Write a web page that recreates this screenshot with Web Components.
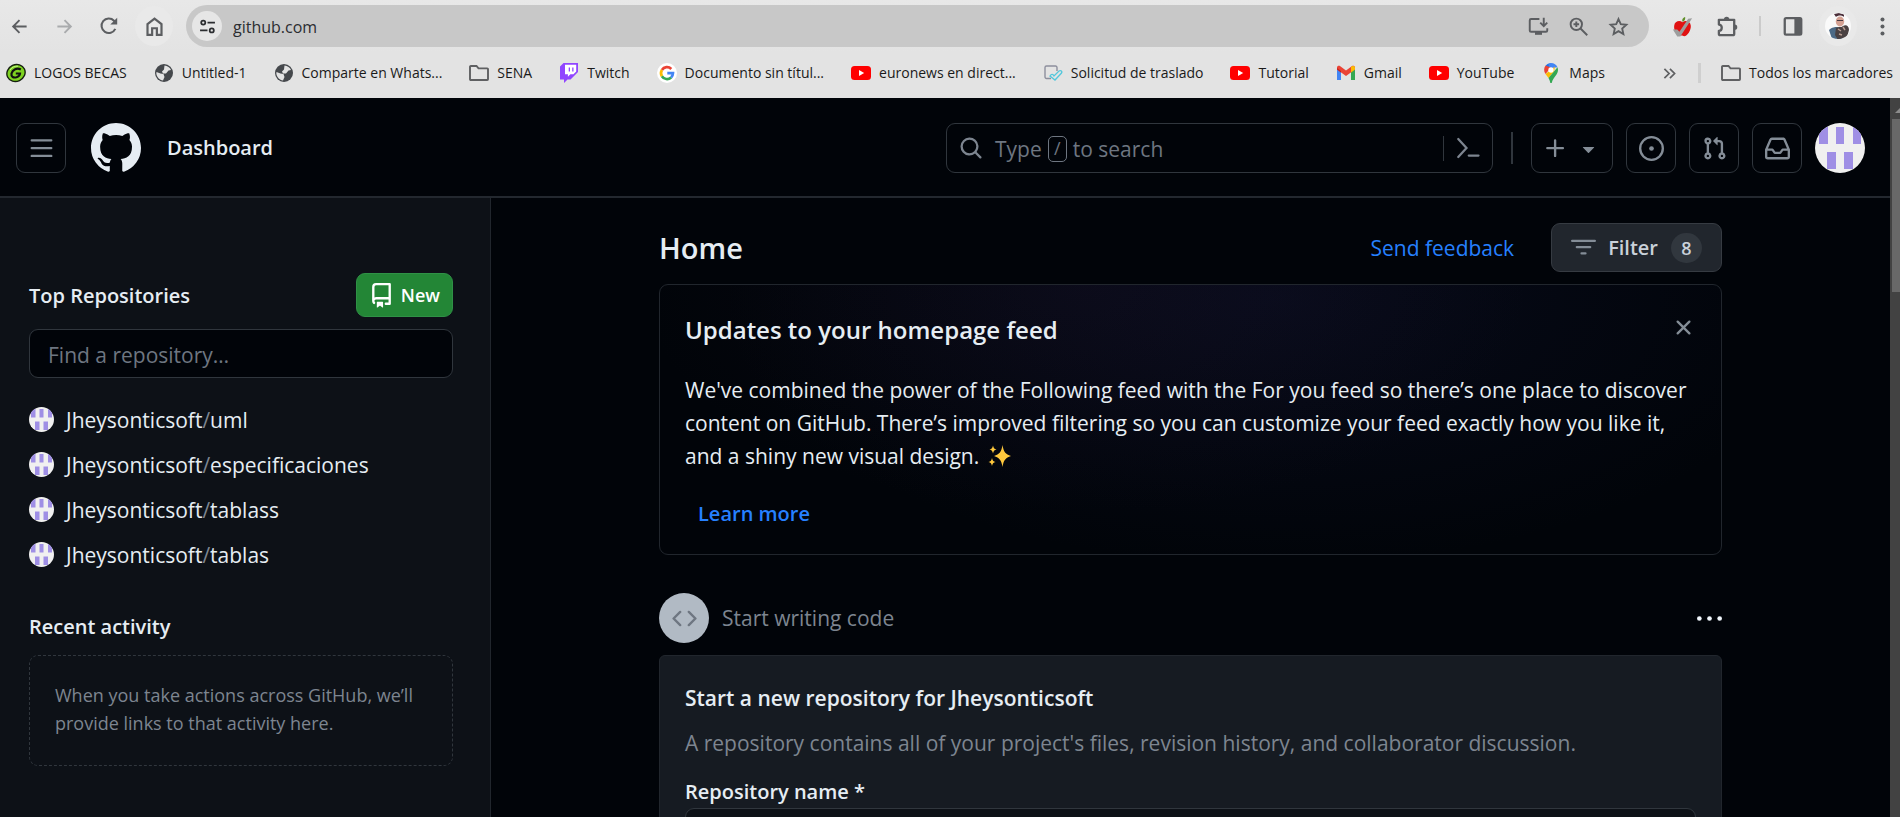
<!DOCTYPE html>
<html lang="es">
<head>
<meta charset="utf-8">
<title>GitHub</title>
<style>
  html, body { margin: 0; height: 100%; }
  body { font-family: "Open Sans", "Noto Sans", sans-serif; background: #010409; color: #e6edf3; overflow: hidden; }
</style>
</head>
<body>
<app-window></app-window>

<script>
const RESET = `
  *, *::before, *::after { box-sizing: border-box; }
  h1, h2, h3, p, ul { margin: 0; padding: 0; }
  ul { list-style: none; }
  button, input { font: inherit; color: inherit; margin: 0; padding: 0; border: 0; background: none; }
  button { cursor: pointer; }
  a { color: inherit; text-decoration: none; }
`;

function define(name, css, html) {
  customElements.define(name, class extends HTMLElement {
    constructor() {
      super();
      const template = document.createElement('template');
      template.innerHTML = `<style>${RESET}${css}</style>${typeof html === 'function' ? html(this) : html}`;
      this.attachShadow({ mode: 'open' }).append(template.content.cloneNode(true));
    }
  });
}

/* Each entry: [viewBox, markup] */
const ICONS = {
  back: ['0 0 24 24', '<path d="M21 12H4.500M12 4l-8 8 8 8" fill="none" stroke="currentColor" stroke-width="2.400"/>'],
  forward: ['0 0 24 24', '<path d="M3 12h16.500M12 4l8 8-8 8" fill="none" stroke="currentColor" stroke-width="2.400"/>'],
  reload: ['0 0 24 24', '<path d="M19.600 15.500A8.700 8.700 0 1 1 18 5.600l2.500 2.600" fill="none" stroke="currentColor" stroke-width="2.500"/><path d="M21.800 2v8.200h-8.200z" fill="currentColor"/>'],
  home: ['0 0 24 24', '<path d="M4 9.300 12 3l8 6.300V21.500h-5.300V14H9.300v7.500H4z" fill="none" stroke="currentColor" stroke-width="2.500"/>'],
  tune: ['0 0 24 24', '<g fill="none" stroke="currentColor" stroke-width="2.500"><circle cx="6" cy="6.500" r="2.900"/><path d="M12 6.500h10.500M1.500 17.500H12"/><circle cx="18" cy="17.500" r="2.900"/></g>'],
  install: ['0 0 24 24', '<path d="M13 3.500H3.500a1.500 1.500 0 0 0-1.500 1.500v11.500a1.500 1.500 0 0 0 1.500 1.500h17a1.500 1.500 0 0 0 1.500-1.500V14M18 2v8M14 7.500l4 4 4-4" fill="none" stroke="currentColor" stroke-width="2.200"/><path d="M8 18h8v3.500H8z" fill="currentColor"/>'],
  zoom: ['0 0 24 24', '<g fill="none" stroke="currentColor" stroke-width="2.200"><circle cx="9.500" cy="9.500" r="6.500"/><path d="M14.300 14.300 22 22M6.300 9.500h6.400M9.500 6.300v6.400"/></g>'],
  star: ['0 0 24 24', '<path d="m12 3.500 2.600 5.900 6.400.6-4.800 4.300 1.400 6.300L12 17.300l-5.600 3.300 1.400-6.300L3 10l6.400-.6z" fill="none" stroke="currentColor" stroke-width="2.100"/>'],
  apple: ['0 0 24 24', '<path d="M12 7c3-2.500 9-1.500 9.500 4 .4 5-4 12-7.500 12-1.500 0-2-.6-3-.6s-2 .6-3.500 0C4 20.500 2 15 2.500 11 3 6 8.500 4.500 12 7z" fill="#e01212"/><path d="M12 6.500C11 4 12.500 1.500 15 1c.5 2.500-.5 4.500-3 5.500z" fill="#5f8f2a"/><path d="M1 15.500h5l2.500 2.500L18.500 3l4.500-.5L9.500 23.500H6z" fill="#9d9d9d"/>'],
  puzzle: ['0 0 24 24', '<path d="M3 5h16v14.500a1.500 1.500 0 0 1-1.500 1.500h-13A1.500 1.500 0 0 1 3 19.500V16.500c4 0 4-6.500 0-6.500z" fill="none" stroke="currentColor" stroke-width="2.400" stroke-linejoin="round"/><path d="M8.300 4.500a2.800 2.800 0 0 1 5.600 0zM19.500 10a2.700 2.700 0 0 1 0 5.400z" fill="currentColor"/>'],
  panel: ['0 0 24 24', '<rect x="3" y="3.500" width="18" height="18" rx="1.500" fill="none" stroke="currentColor" stroke-width="2.500"/><path d="M13.500 3h7.500v18.500h-7.500z" fill="currentColor"/>'],
  dots: ['0 0 24 24', '<g fill="currentColor"><circle cx="12" cy="4" r="2.300"/><circle cx="12" cy="12" r="2.300"/><circle cx="12" cy="20" r="2.300"/></g>'],
  face: ['0 0 26 26', '<defs><clipPath id="c"><circle cx="13" cy="13" r="13"/></clipPath></defs><g clip-path="url(#c)"><path fill="#fafafa" d="M0 0h26v26H0z"/><path d="M4 17c3-3 6-3 8-3l4 1 2 11H7z" fill="#4c6a86"/><ellipse cx="15" cy="8.500" rx="4.200" ry="5" fill="#d5a294"/><path d="M9 1l2 3c2-2 6-2 8 0V1.500L14 0z" fill="#4b2f3a"/><path d="M12 7.500h6" stroke="#4a3b42" stroke-width="1"/><path d="M11 15c3-2 5 0 7-2 3-2 6 0 6 4l-2 7-9 3-3-5z" fill="#4a4142"/><path d="M13 16l3 2m2-4 2 3m-6 4 3 1" stroke="#b79d92" stroke-width="1.500"/></g>'],
  gring: ['0 0 20 20', '<ellipse cx="10" cy="10" rx="10" ry="9" transform="rotate(-25 10 10)" fill="#16200f"/><ellipse cx="10" cy="10" rx="8.600" ry="7.600" transform="rotate(-25 10 10)" fill="#7ed321"/><path d="M14.800 6.500C11 4.500 6.500 6.500 5.500 10.500c-.6 3.500 2 4.500 5 3.800 2-.6 3.300-2 3.500-3.800H9.800" fill="none" stroke="#111" stroke-width="2.200"/><path d="M4 7C6 4 9 3 12 3.200" stroke="#c6f58c" fill="none"/>'],
  globe: ['0 0 20 20', '<circle cx="10" cy="10" r="9" fill="#45484c"/><path d="M10.500 2.500c3 .2 5.500 2 6.500 4.500l-2.500.5-2.500 3H9l-1-2 2-2zM2.500 9l4 1.500 3 .5 1 3-1.500 3.500c-3.500-.5-6.300-3.500-6.700-7z" fill="#e3e3e3"/><path d="M12 13l2.500-1 2 .5c-.7 2-2 3.500-4 4.300z" fill="#45484c"/>'],
  folder: ['0 0 20 20', '<path d="M1 16.200V3.700a.8.800 0 0 1 .8-.7h5.700l2 2.400h8.700a.8.800 0 0 1 .8.800v10a.8.800 0 0 1-.8.800H1.800a.8.800 0 0 1-.8-.8z" fill="none" stroke="#5f6062" stroke-width="1.900"/>'],
  twitch: ['0 0 20 20', '<path d="M4.500 0 1 3.500v13h4V20l3.500-3.500h3L19 9V0z" fill="#9146ff"/><path d="M6 1.800h11.200V8.500l-2.800 2.800h-3l-2.500 2.500v-2.500H6z" fill="#fff"/><path d="M9.700 4.500h1.300v4H9.700zM13.200 4.500h1.300v4h-1.300z" fill="#9146ff"/>'],
  google: ['0 0 20 20', '<circle cx="10" cy="10" r="10" fill="#fff"/><g fill="none" stroke-width="2.700"><path d="M14.300 6A6 6 0 0 0 4.900 7" stroke="#ea4335"/><path d="M4.900 7a6 6 0 0 0 0 6.200" stroke="#fbbc05"/><path d="M4.900 13.200a6 6 0 0 0 9.200 1.200" stroke="#34a853"/><path d="M14.100 14.400A6 6 0 0 0 16 10.100h-5.700" stroke="#4285f4"/></g>'],
  youtube: ['0 0 20 20', '<rect y="3" width="20" height="14" rx="3.500" fill="#f00"/><path d="M8 7v6l5.200-3z" fill="#fff"/>'],
  solicitud: ['0 0 20 20', '<path d="M8 15.500H3.500A1.500 1.500 0 0 1 2 14V4.500A1.500 1.500 0 0 1 3.500 3h9A1.500 1.500 0 0 1 14 4.500V8" fill="none" stroke="#8d8f9d" stroke-width="1.400"/><path d="M7 13c1.500-2.500 3-2 4 0l5-5c2-1 3.500.5 2.500 2L12 17z" fill="none" stroke="#52c7dc" stroke-width="1.300"/>'],
  gmail: ['0 0 20 20', '<path d="M1 17V5.500l4 3V17z" fill="#4285f4"/><path d="M15 17V8.500l4-3V17z" fill="#34a853"/><path d="M1 6.500V4.500C1 3 3 2.300 4.300 3.300L10 7.600l5.700-4.300C17 2.300 19 3 19 4.500v2L10 13z" fill="#ea4335"/><path d="M15 3.800c1.500-1.300 4-.8 4 1.200v1.500l-4 3z" fill="#fbbc04"/><path d="M1 6.500V5l4 3v1.500z" fill="#c5221f"/>'],
  maps: ['0 0 20 20', '<path d="M10 0a7 7 0 0 0-5.400 2.600L8 5.500z" fill="#1a73e8"/><path d="M10 0C13 0 15.500 1.600 16.500 4.300L8 5.500 7.500 1z" fill="#4285f4"/><path d="M4.600 2.600C2.600 5.200 2.700 8.500 4.500 11L10 4.500z" fill="#ea4335"/><path d="M4.500 11l3 4L13 8.500l1-5z" fill="#fbbc04"/><path d="M16.500 4.300c1 2.700.5 5-1 7.200C13.500 14.500 11.500 16 10.700 20h-1.400c-.3-2-1-3.500-1.800-5z" fill="#34a853"/><circle cx="10" cy="7" r="2.700" fill="#fff"/>'],
  more: ['0 0 20 20', '<path d="M4 4.500 9.500 10 4 15.500M10.500 4.500 16 10l-5.500 5.500" fill="none" stroke="#5f6062" stroke-width="2"/>'],
  menu: ['0 0 16 16', '<path fill="currentColor" d="M1 2.750A.75.75 0 0 1 1.750 2h12.500a.75.75 0 0 1 0 1.500H1.750A.75.75 0 0 1 1 2.750Zm0 5A.75.75 0 0 1 1.750 7h12.500a.75.75 0 0 1 0 1.500H1.750A.75.75 0 0 1 1 7.750ZM1.750 12h12.500a.75.75 0 0 1 0 1.500H1.750a.75.75 0 0 1 0-1.500Z"/>'],
  mark: ['0 0 16 16', '<path fill="currentColor" d="M8 0c4.420 0 8 3.580 8 8a8.013 8.013 0 0 1-5.450 7.590c-.4.080-.55-.17-.55-.38 0-.27.010-1.130.010-2.200 0-.75-.25-1.230-.54-1.480 1.780-.2 3.650-.88 3.650-3.950 0-.88-.31-1.590-.82-2.150.080-.2.360-1.020-.08-2.120 0 0-.67-.22-2.200.82-.64-.18-1.320-.27-2-.27-.68 0-1.360.090-2 .27-1.530-1.030-2.200-.82-2.200-.82-.44 1.100-.16 1.920-.08 2.120-.51.560-.82 1.280-.82 2.150 0 3.060 1.860 3.750 3.640 3.950-.23.200-.44.550-.51 1.070-.46.210-1.610.550-2.330-.66-.15-.24-.6-.83-1.230-.82-.67.010-.27.380.010.530.340.190.730.900.820 1.130.160.450.680 1.310 2.690.940 0 .670.010 1.300.010 1.490 0 .210-.15.450-.55.380A7.995 7.995 0 0 1 0 8c0-4.420 3.580-8 8-8Z"/>'],
  search: ['0 0 16 16', '<path fill="currentColor" d="M10.680 11.740a6 6 0 0 1-7.922-8.982 6 6 0 0 1 8.982 7.922l3.040 3.040a.749.749 0 0 1-.326 1.275.749.749 0 0 1-.734-.215ZM11.500 7a4.499 4.499 0 1 0-8.997 0A4.499 4.499 0 0 0 11.500 7Z"/>'],
  terminal: ['0 0 16 16', '<path d="M1.500 2 7 8l-5.500 6M8.500 13h6.500" fill="none" stroke="currentColor" stroke-width="1.500" stroke-linecap="round"/>'],
  plus: ['0 0 16 16', '<path fill="currentColor" d="M7.750 2a.75.75 0 0 1 .75.75V7h4.250a.75.75 0 0 1 0 1.500H8.500v4.250a.75.75 0 0 1-1.500 0V8.500H2.750a.75.75 0 0 1 0-1.500H7V2.750A.75.75 0 0 1 7.750 2Z"/>'],
  caret: ['0 0 16 16', '<path fill="currentColor" d="m4.427 7.427 3.396 3.396a.25.25 0 0 0 .354 0l3.396-3.396A.25.25 0 0 0 11.396 7H4.604a.25.25 0 0 0-.177.427Z"/>'],
  issue: ['0 0 16 16', '<path fill="currentColor" d="M8 9.500a1.500 1.500 0 1 0 0-3 1.500 1.500 0 0 0 0 3Z"/><path fill="currentColor" d="M8 0a8 8 0 1 1 0 16A8 8 0 0 1 8 0ZM1.500 8a6.500 6.500 0 1 0 13 0 6.500 6.500 0 0 0-13 0Z"/>'],
  pull: ['0 0 16 16', '<path fill="currentColor" d="M1.500 3.250a2.250 2.250 0 1 1 3 2.122v5.256a2.251 2.251 0 1 1-1.500 0V5.372A2.250 2.250 0 0 1 1.500 3.250Zm5.677-.177L9.573.677A.25.25 0 0 1 10 .854V2.500h1A2.500 2.500 0 0 1 13.500 5v5.628a2.251 2.251 0 1 1-1.500 0V5a1 1 0 0 0-1-1h-1v1.646a.25.25 0 0 1-.427.177L7.177 3.427a.25.25 0 0 1 0-.354ZM3.750 2.500a.75.75 0 1 0 0 1.500.75.75 0 0 0 0-1.500Zm0 9.500a.75.75 0 1 0 0 1.500.75.75 0 0 0 0-1.500Zm8.250.75a.75.75 0 1 0 1.500 0 .75.75 0 0 0-1.500 0Z"/>'],
  inbox: ['0 0 16 16', '<path fill="currentColor" d="M2.800 2.060A1.750 1.750 0 0 1 4.410 1h7.180c.7 0 1.333.417 1.610 1.060l2.740 6.395c.040.093.060.194.060.295v4.500A1.750 1.750 0 0 1 14.250 15H1.750A1.750 1.750 0 0 1 0 13.250v-4.500c0-.101.020-.202.060-.295Zm1.610.440a.25.25 0 0 0-.23.152L1.887 8H4.750a.75.75 0 0 1 .6.300L6.625 10h2.750l1.275-1.700a.75.75 0 0 1 .6-.3h2.863L11.820 2.652a.25.25 0 0 0-.23-.152Zm10.090 7h-2.875l-1.275 1.700a.75.75 0 0 1-.6.300h-3.500a.75.75 0 0 1-.6-.3L4.375 9.500H1.500v3.750c0 .138.112.25.25.25h12.500a.25.25 0 0 0 .25-.25Z"/>'],
  repo: ['0 0 16 16', '<path fill="currentColor" d="M2 2.500A2.500 2.500 0 0 1 4.500 0h8.750a.75.75 0 0 1 .75.750v12.500a.75.75 0 0 1-.75.750h-2.500a.75.75 0 0 1 0-1.500h1.750v-2h-8a1 1 0 0 0-.714 1.700.75.75 0 1 1-1.072 1.050A2.495 2.495 0 0 1 2 11.500Zm10.500-1h-8a1 1 0 0 0-1 1v6.708A2.486 2.486 0 0 1 4.500 9h8ZM5 12.250a.25.25 0 0 1 .25-.25h3.500a.25.25 0 0 1 .25.250v3.250a.25.25 0 0 1-.4.200l-1.450-1.087a.249.249 0 0 0-.3 0L5.400 15.700a.25.25 0 0 1-.4-.2Z"/>'],
  filter: ['0 0 16 16', '<path fill="currentColor" d="M.75 3h14.500a.75.75 0 0 1 0 1.500H.75a.75.75 0 0 1 0-1.500ZM3 7.750A.75.75 0 0 1 3.750 7h8.500a.75.75 0 0 1 0 1.500h-8.500A.75.75 0 0 1 3 7.750Zm3 4a.75.75 0 0 1 .75-.75h2.500a.75.75 0 0 1 0 1.500h-2.500a.75.75 0 0 1-.75-.75Z"/>'],
  close: ['0 0 16 16', '<path fill="currentColor" d="M3.720 3.720a.75.75 0 0 1 1.060 0L8 6.940l3.220-3.220a.749.749 0 0 1 1.275.326.749.749 0 0 1-.215.734L9.060 8l3.220 3.220a.749.749 0 0 1-.326 1.275.749.749 0 0 1-.734-.215L8 9.060l-3.220 3.220a.751.751 0 0 1-1.042-.018.751.751 0 0 1-.018-1.042L6.940 8 3.720 4.780a.75.75 0 0 1 0-1.060Z"/>'],
  code: ['0 0 16 16', '<path fill="currentColor" d="m11.280 3.220 4.250 4.250a.75.75 0 0 1 0 1.060l-4.250 4.250a.749.749 0 0 1-1.275-.326.749.749 0 0 1 .215-.734L13.940 8l-3.720-3.720a.749.749 0 0 1 .326-1.275.749.749 0 0 1 .734.215Zm-6.560 0a.751.751 0 0 1 1.042.018.751.751 0 0 1 .018 1.042L2.060 8l3.720 3.720a.749.749 0 0 1-.326 1.275.749.749 0 0 1-.734-.215L.47 8.530a.75.75 0 0 1 0-1.060Z"/>'],
  kebab: ['0 0 16 16', '<g fill="currentColor"><circle cx="1.500" cy="8" r="1.500"/><circle cx="8" cy="8" r="1.500"/><circle cx="14.500" cy="8" r="1.500"/></g>'],
  sparkles: ['0 0 24 24', '<g fill="#ffc83d"><path d="M14.500 1c1 6.500 3 9.500 8.500 11-5.500 1.500-7.500 4.500-8.500 11-1-6.500-3-9.500-8.500-11 5.500-1.500 7.500-4.500 8.500-11z"/><path d="M5 1.500c.5 2.500 1.200 3.300 3.500 4-2.300.7-3 1.500-3.500 4-.5-2.500-1.200-3.300-3.500-4 2.300-.7 3-1.500 3.500-4zM4 14c.5 2.500 1.200 3.300 3.500 4-2.300.7-3 1.500-3.500 4-.5-2.500-1.200-3.300-3.500-4 2.300-.7 3-1.500 3.500-4z"/></g>'],
};

define('ui-icon', `
  :host { display: block; flex: none; width: var(--size, 25px); height: var(--size, 25px); }
  svg { display: block; width: 100%; height: 100%; }
`, el => {
  const [box, art] = ICONS[el.getAttribute('name')];
  return `<svg viewBox="${box}" aria-hidden="true">${art}</svg>`;
});

define('user-avatar', `
  :host { display: block; flex: none; width: var(--size, 25px); height: var(--size, 25px); border-radius: 50%; overflow: hidden; background: #f0f0f0; }
  svg { display: block; width: 100%; height: 100%; }
`, `<svg viewBox="0 0 50 50" aria-hidden="true"><path fill="#9f8fe5" d="M4 4h9v17H4zM21 4h8v17h-8zM38 4h8v17h-8zM12 29h9v17h-9zM29 29h9v17h-9z"/></svg>`);

/* ---- Browser chrome ---- */
define('tool-button', `
  :host { display: block; flex: none; }
  button { display: grid; place-items: center; width: var(--w, 38px); height: 40px; border-radius: 50%; color: var(--fg, #5c5e61); background: var(--bg, none); }
  ui-icon { --size: var(--glyph, 21px); }
`, el => `<button type="button" aria-label="${el.getAttribute('label')}"><ui-icon name="${el.getAttribute('icon')}"></ui-icon></button>`);

define('browser-toolbar', `
  :host { display: flex; align-items: center; height: 52px; gap: 7px; }
  .address { flex: 1; display: flex; align-items: center; height: 42px; margin: 0 7px 0 6px; padding: 0 12px 0 6px; border-radius: 21px; background: #c8c8c8; color: #2b2d30; }
  .site { display: grid; place-items: center; width: 30px; height: 30px; border-radius: 50%; background: #e6e6e6; --size: 17px; }
  input { flex: 1; min-width: 0; height: 24px; padding: 2px 0 0 11px; font-size: 16px; outline: 0; }
  .rule { width: 2px; height: 20px; margin: 0 6px; background: #cbcbcb; }
  .actions { display: flex; gap: 2px; }
`, `
  <tool-button icon="back" label="Atrás" style="--glyph:19px"></tool-button>
  <tool-button icon="forward" label="Adelante" style="--glyph:19px;--fg:#a9abad"></tool-button>
  <tool-button icon="reload" label="Recargar" style="--glyph:20px"></tool-button>
  <tool-button icon="home" label="Inicio" style="--bg:#e9e9e9"></tool-button>
  <div class="address">
    <button class="site" type="button" aria-label="Información del sitio"><ui-icon name="tune"></ui-icon></button>
    <input type="text" aria-label="Dirección" value="github.com">
    <div class="actions">
      <tool-button icon="install" label="Instalar"></tool-button>
      <tool-button icon="zoom" label="Zoom"></tool-button>
      <tool-button icon="star" label="Añadir a marcadores"></tool-button>
    </div>
  </div>
  <tool-button icon="apple" label="Extensión"></tool-button>
  <tool-button icon="puzzle" label="Extensiones" style="--glyph:23px"></tool-button>
  <div class="rule"></div>
  <tool-button icon="panel" label="Panel lateral" style="--glyph:22px"></tool-button>
  <tool-button icon="face" label="Perfil" style="--glyph:26px;--bg:#e9e9e9"></tool-button>
  <tool-button icon="dots" label="Menú" style="--w:36px"></tool-button>
`);

define('bookmark-item', `
  :host { display: block; flex: none; }
  a { display: flex; align-items: center; gap: 8px; font-size: 14px; line-height: 20px; color: #1a1a1a; white-space: nowrap; --size: 20px; }
`, el => `<a href="#"><ui-icon name="${el.getAttribute('icon')}"></ui-icon><span><slot></slot></span></a>`);

define('bookmarks-bar', `
  :host { display: flex; align-items: center; height: 46px; padding: 0 7px 4px 6px; }
  nav { display: flex; gap: 27px; }
  .end { display: flex; align-items: center; margin-left: auto; --size: 20px; }
  .rule { width: 3px; height: 20px; margin: 0 20px; background: #cfcfcf; }
`, `
  <nav>
    <bookmark-item icon="gring">LOGOS BECAS</bookmark-item>
    <bookmark-item icon="globe">Untitled-1</bookmark-item>
    <bookmark-item icon="globe">Comparte en Whats...</bookmark-item>
    <bookmark-item icon="folder">SENA</bookmark-item>
    <bookmark-item icon="twitch">Twitch</bookmark-item>
    <bookmark-item icon="google">Documento sin títul...</bookmark-item>
    <bookmark-item icon="youtube">euronews en direct...</bookmark-item>
    <bookmark-item icon="solicitud">Solicitud de traslado</bookmark-item>
    <bookmark-item icon="youtube">Tutorial</bookmark-item>
    <bookmark-item icon="gmail">Gmail</bookmark-item>
    <bookmark-item icon="youtube">YouTube</bookmark-item>
    <bookmark-item icon="maps">Maps</bookmark-item>
  </nav>
  <div class="end">
    <button type="button" aria-label="Más marcadores"><ui-icon name="more" style="--size:17px"></ui-icon></button>
    <div class="rule"></div>
    <bookmark-item icon="folder">Todos los marcadores</bookmark-item>
  </div>
`);

/* ---- GitHub header ---- */
define('square-button', `
  :host { display: block; flex: none; }
  button { display: flex; align-items: center; justify-content: center; gap: 8px; min-width: 50px; height: 50px; padding: 0 11px; border: 1px solid #30363d; border-radius: 9px; color: #848d97; }
`, el => `<button type="button" aria-label="${el.getAttribute('label')}"><slot></slot></button>`);

define('search-box', `
  :host { display: flex; box-sizing: border-box; align-items: center; height: 50px; border: 1px solid #30363d; border-radius: 9px; color: #7d8590; }
  .field { flex: 1; display: flex; align-items: center; height: 100%; padding-left: 12px; text-align: left; }
  ui-icon { --size: 24px; }
  .text { display: flex; align-items: center; gap: 6px; padding: 2px 0 0 12px; font-size: 21px; line-height: 30px; color: #6e7681; }
  kbd { width: 19px; height: 26px; border: 1px solid #6e7681; border-radius: 5px; font: inherit; font-size: 18px; line-height: 23px; text-align: center; }
  .cmd { display: flex; align-items: center; height: 25px; padding: 0 12px; border-left: 1px solid #30363d; }
`, `
  <button class="field" type="button"><ui-icon name="search"></ui-icon><span class="text"><span>Type</span><kbd>/</kbd><span>to search</span></span></button>
  <button class="cmd" type="button" aria-label="Command palette"><ui-icon name="terminal"></ui-icon></button>
`);

define('site-header', `
  :host { display: flex; box-sizing: border-box; align-items: center; height: 100px; padding: 2px 25px 0 16px; border-bottom: 2px solid #23282f; background: #010409; }
  .logo { margin: 0 26px 0 25px; color: #e6edf3; --size: 50px; }
  .title { font-size: 20px; font-weight: 600; line-height: 30px; }
  search-box { width: 30%; max-width: 547px; margin-left: auto; }
  .rule { width: 2px; height: 32px; margin: 0 18px; background: #30363d; }
  .tools { display: flex; gap: 13px; }
`, `
  <square-button label="Menu"><ui-icon name="menu"></ui-icon></square-button>
  <a class="logo" href="#" aria-label="GitHub"><ui-icon name="mark"></ui-icon></a>
  <a class="title" href="#">Dashboard</a>
  <search-box></search-box>
  <div class="rule"></div>
  <div class="tools">
    <square-button label="Create new"><ui-icon name="plus"></ui-icon><ui-icon name="caret"></ui-icon></square-button>
    <square-button label="Issues"><ui-icon name="issue"></ui-icon></square-button>
    <square-button label="Pull requests"><ui-icon name="pull"></ui-icon></square-button>
    <square-button label="Inbox"><ui-icon name="inbox"></ui-icon></square-button>
    <user-avatar style="--size:50px"></user-avatar>
  </div>
`);

/* ---- Left column ---- */
define('repo-item', `
  :host { display: block; }
  a { display: flex; align-items: center; gap: 12px; height: 45px; font-size: 21px; line-height: 30px; }
  i { font-style: normal; color: #7d8590; }
`, el => `<a href="#"><user-avatar></user-avatar><span>${el.getAttribute('owner')}<i>/</i><slot></slot></span></a>`);

define('side-column', `
  :host { display: block; padding: 75px 37px 0 29px; border-right: 1px solid #21262d; background: #0d1117; }
  .head { display: flex; align-items: center; justify-content: space-between; }
  h2 { font-size: 20px; font-weight: 600; line-height: 33px; }
  .new { display: flex; align-items: center; gap: 7px; height: 44px; padding: 0 12px; border: 1px solid #2f9146; border-radius: 9px; background: #238636; color: #fff; font-size: 18px; font-weight: 600; }
  input { display: block; width: 100%; height: 49px; margin-top: 12px; padding: 2px 18px 0; border: 1px solid #30363d; border-radius: 9px; background: #010409; font-size: 21px; }
  input::placeholder { color: #6e7681; opacity: 1; }
  ul { margin-top: 19px; }
  .recent { margin-top: 33px; }
  .empty { margin-top: 12px; padding: 25px 25px 28px; border: 1px dashed #30363d; border-radius: 9px; color: #7d8590; font-size: 18px; line-height: 28px; }
`, `
  <div class="head"><h2>Top Repositories</h2><button class="new" type="button"><ui-icon name="repo"></ui-icon>New</button></div>
  <input type="text" aria-label="Find a repository" placeholder="Find a repository…">
  <ul>
    <li><repo-item owner="Jheysonticsoft">uml</repo-item></li>
    <li><repo-item owner="Jheysonticsoft">especificaciones</repo-item></li>
    <li><repo-item owner="Jheysonticsoft">tablass</repo-item></li>
    <li><repo-item owner="Jheysonticsoft">tablas</repo-item></li>
  </ul>
  <h2 class="recent">Recent activity</h2>
  <p class="empty">When you take actions across GitHub, we’ll provide links to that activity here.</p>
`);

/* ---- Feed ---- */
define('feed-heading', `
  :host { display: flex; align-items: center; height: 49px; }
  h1 { margin-right: auto; font-size: 29px; font-weight: 600; line-height: 40px; }
  a { font-size: 21px; line-height: 30px; color: #2680ff; }
  .filter { display: flex; align-items: center; height: 49px; margin-left: 37px; padding: 0 19px; border: 1px solid #363b42; border-radius: 9px; background: #21262d; font-size: 20px; font-weight: 600; color: #c9d1d9; }
  .filter ui-icon { margin-right: 12px; color: #848d97; }
  .count { width: 31px; height: 30px; margin-left: 13px; border-radius: 15px; background: #31373e; font-size: 18px; line-height: 30px; }
`, `
  <h1>Home</h1>
  <a href="#">Send feedback</a>
  <button class="filter" type="button"><ui-icon name="filter"></ui-icon>Filter<span class="count">8</span></button>
`);

define('notice-card', `
  :host { display: block; margin-top: 12px; padding: 26px 25px 16px; border: 1px solid #21262d; border-radius: 9px;
    background: radial-gradient(ellipse 42% 85% at 40% 0%, rgba(50, 30, 65, .15), transparent), radial-gradient(ellipse 52% 100% at 58% 5%, rgba(35, 40, 100, .18), transparent), #010409; }
  .head { display: flex; align-items: flex-start; justify-content: space-between; }
  h2 { font-size: 24px; font-weight: 600; line-height: 38px; }
  .close { display: grid; place-items: center; height: 33px; color: #848d97; }
  p { margin-top: 25px; font-size: 21px; line-height: 33px; }
  p ui-icon { display: inline-block; margin-left: 3px; vertical-align: -4px; --size: 24px; }
  .more { display: inline-block; margin-top: 16px; padding: 0 13px; font-size: 20px; font-weight: 600; line-height: 49px; color: #2680ff; }
`, `
  <div class="head"><h2>Updates to your homepage feed</h2><button class="close" type="button" aria-label="Close"><ui-icon name="close"></ui-icon></button></div>
  <p><slot></slot> <ui-icon name="sparkles"></ui-icon></p>
  <a class="more" href="#">Learn more</a>
`);

define('start-row', `
  :host { display: flex; align-items: center; gap: 13px; margin-top: 38px; font-size: 21px; line-height: 30px; color: #7d8590; }
  .disc { display: grid; place-items: center; width: 50px; height: 50px; border-radius: 50%; background: #b1bac4; color: #6e7681; }
  button { margin-left: auto; color: #f0f6fc; }
`, `
  <span class="disc"><ui-icon name="code"></ui-icon></span>
  <span><slot></slot></span>
  <button type="button" aria-label="More options"><ui-icon name="kebab"></ui-icon></button>
`);

define('new-repo-card', `
  :host { display: block; margin-top: 12px; padding: 26px 25px; border: 1px solid #21262d; border-radius: 6px; background: #161b22; }
  h3 { font-size: 21px; font-weight: 600; line-height: 33px; }
  p { margin-top: 12px; font-size: 21px; line-height: 33px; color: #7d8590; }
  label { display: block; margin-top: 16px; font-size: 20px; font-weight: 600; line-height: 32px; }
  input { display: block; width: 100%; height: 50px; padding: 0 19px; border: 1px solid #30363d; border-radius: 9px; background: #0d1117; font-size: 21px; }
`, `
  <h3>Start a new repository for Jheysonticsoft</h3>
  <p>A repository contains all of your project's files, revision history, and collaborator discussion.</p>
  <label for="name">Repository name *</label>
  <input id="name" type="text">
`);

define('home-feed', `
  :host { display: block; }
  .inner { max-width: 1063px; margin: 0 auto; padding: 25px 0; }
`, `
  <div class="inner">
    <feed-heading></feed-heading>
    <notice-card>We've combined the power of the Following feed with the For you feed so there’s one place to discover content on GitHub. There’s improved filtering so you can customize your feed exactly how you like it, and a shiny new visual design.</notice-card>
    <start-row>Start writing code</start-row>
    <new-repo-card></new-repo-card>
  </div>
`);

define('scroll-track', `
  :host { display: block; flex: none; box-sizing: border-box; width: 10px; padding-left: 2px; overflow: hidden; background: #424242; }
  .cap { height: 21px; padding: 10px 0 0 3px; }
  .cap::before { content: ""; display: block; width: 10px; height: 5px; background: #8b8b8b; clip-path: polygon(50% 0, 100% 100%, 0 100%); }
  .thumb { height: 24%; background: #686868; }
`, `<div class="cap"></div><div class="thumb"></div>`);

define('app-window', `
  :host { display: flex; flex-direction: column; height: 100vh; }
  .chrome { flex: none; background: linear-gradient(#e8e8e8, #e3e3e3 52px); }
  .page { flex: 1; display: flex; min-height: 0; }
  .view { flex: 1; display: flex; flex-direction: column; min-width: 0; overflow: hidden; }
  site-header { flex: none; }
  .columns { flex: 1; display: grid; grid-template-columns: 491px minmax(0, 1fr); min-height: 0; }
`, `
  <div class="chrome"><browser-toolbar></browser-toolbar><bookmarks-bar></bookmarks-bar></div>
  <div class="page">
    <div class="view">
      <site-header></site-header>
      <div class="columns"><side-column></side-column><home-feed></home-feed></div>
    </div>
    <scroll-track></scroll-track>
  </div>
`);
</script>
</body>
</html>
